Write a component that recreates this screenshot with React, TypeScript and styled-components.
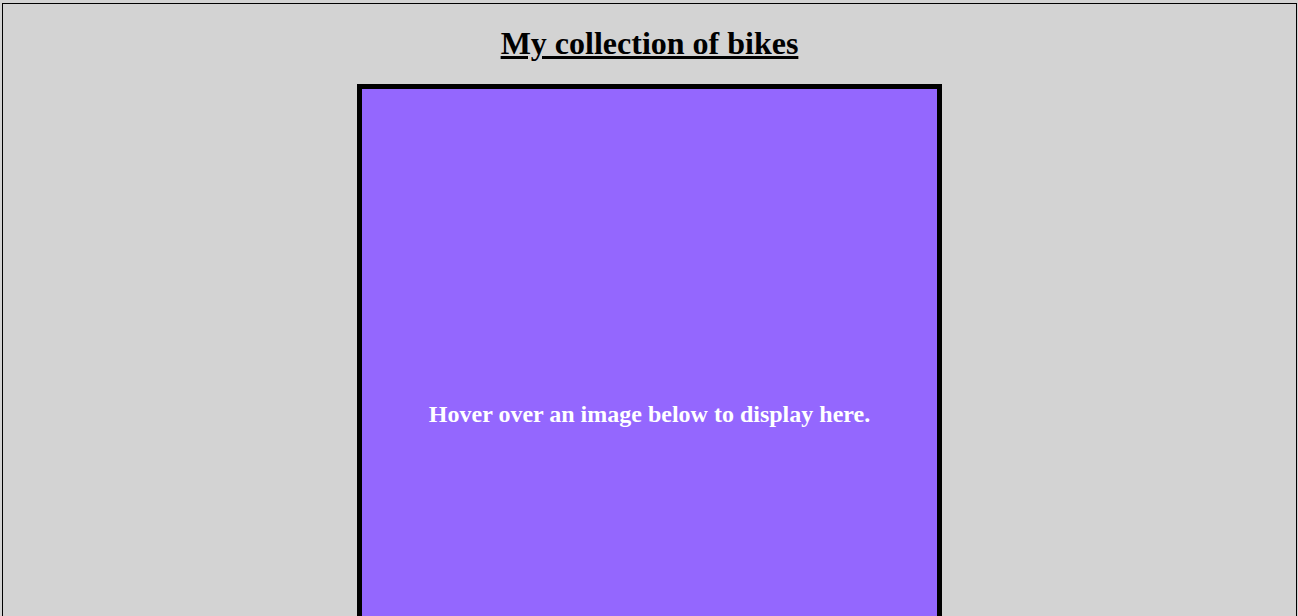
import { createGlobalStyle, styled } from "styled-components";

const GlobalStyle = createGlobalStyle`
  body {
    margin: 3px 1px 0 2px;
    border: 1px solid #000;
    background-color: #d3d3d3;
    font-family: "Liberation Serif", "Times New Roman", serif;
    text-align: center;
  }
`;

export default function App() {
  return (
    <>
      <GlobalStyle />
      <Title>My collection of bikes</Title>
      <Image>Hover over an image below to display here.</Image>
    </>
  );
}

const Title = styled.h1`
  margin: 21px 0 22px;
  font-size: 32px;
  font-weight: 700;
  text-decoration: underline;
  color: #000;
`;

const Image = styled.div`
  width: 575px;
  height: 650px;
  margin: 0 auto;
  border: 5px solid #000;
  background-color: #9467fe;
  color: #fff;
  font-size: 24px;
  font-weight: 700;
  line-height: 650px;
`;
